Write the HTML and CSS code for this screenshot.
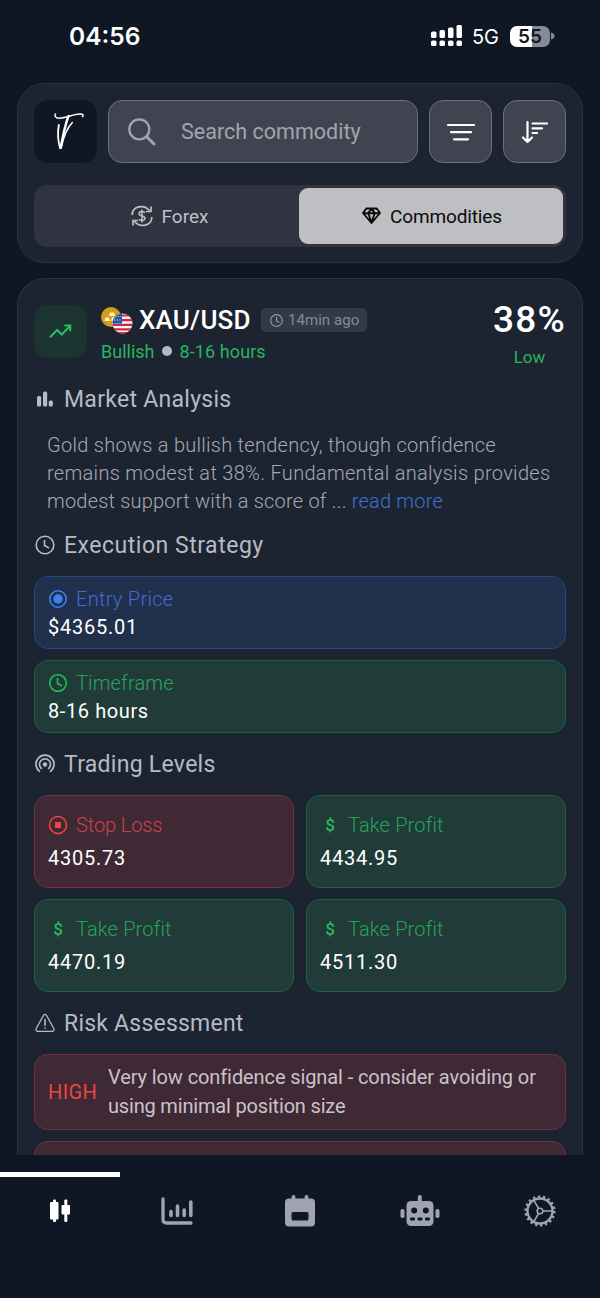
FILE: index.html
```html
<!DOCTYPE html>
<html lang="en">
<head>
	<meta charset="UTF-8">
	<meta name="viewport" content="width=device-width, initial-scale=1">
	<title>Commodities</title>
	<link rel="stylesheet" href="styles.css">
</head>
<body>
	<div class="app">
		<div class="status">
			<span class="clock">04:56</span>
			<div class="status-right">
				<svg class="signal" width="32" height="22" viewBox="0 0 32 22" fill="#fff">
					<rect x="0" y="6.500" width="5.500" height="6.500" rx="1.500"/><rect x="8.500" y="5" width="5.500" height="8" rx="1.500"/><rect x="17" y="2.500" width="5.500" height="10.500" rx="1.500"/><rect x="25.500" y="0" width="5.500" height="13" rx="1.500"/>
					<rect x="0" y="15.500" width="5.500" height="5.500" rx="1.500"/><rect x="8.500" y="15.500" width="5.500" height="5.500" rx="1.500"/><rect x="17" y="15.500" width="5.500" height="5.500" rx="1.500"/><rect x="25.500" y="15.500" width="5.500" height="5.500" rx="1.500"/>
				</svg>
				<span class="net">5G</span>
				<span class="battery">55</span>
				<svg width="4" height="8" viewBox="0 0 4 8"><path d="M0 0.500Q3.500 1.500 3.500 4T0 7.500Z" fill="#858a95"/></svg>
			</div>
		</div>

		<div class="card top">
			<div class="row">
				<div class="logo">
					<svg width="63" height="63" viewBox="0 0 63 63" fill="none" stroke="#fff" stroke-linecap="round" stroke-linejoin="round">
						<path d="M21.500 14C20 15.500 21.500 18.200 25 18.200C33 18 40 13.500 47 14C49.500 14.300 49.500 15.500 48.500 16.500" stroke-width="1.500"/>
						<path d="M34.500 16C31.500 24 29 35 26.800 47.500" stroke-width="2.400"/>
						<path d="M24.800 25C23.500 33 24.300 42 26 48" stroke-width="1.800"/>
						<path d="M27 48.300C29 39 33 28 38.300 22.500" stroke-width="1.600"/>
					</svg>
				</div>
				<div class="search">
					<svg width="28" height="28" viewBox="0 0 28 28" fill="none" stroke="#a2a5ae" stroke-linecap="round"><circle cx="11.300" cy="11.300" r="10" stroke-width="2.300"/><path d="M18.800 18.800L26 26" stroke-width="3"/></svg>
					<span>Search commodity</span>
				</div>
				<div class="btn">
					<svg width="28" height="18" viewBox="0 0 28 18" stroke="#fff" stroke-width="2.200" stroke-linecap="round"><path d="M1 2H27M4 9.200H24M7 16.300H21"/></svg>
				</div>
				<div class="btn">
					<svg width="27" height="24" viewBox="0 0 27 24" fill="none" stroke="#fff" stroke-width="2.200" stroke-linecap="round" stroke-linejoin="round"><path d="M6.500 2V22M2 17.500L6.500 22L11 17.500M11.500 3.500H26M11.500 8.300H21M11.500 13H16"/></svg>
				</div>
			</div>
			<div class="tabs">
				<div class="tab">
					<svg width="22" height="22" viewBox="0 0 22 22" fill="none" stroke="#bfc1c9" stroke-width="1.700"><path d="M1.200 10C1.200 1.500 12.500-1.500 18.500 5.500M20 1.500V6.500H15M20.800 12C20.800 20.500 9.500 23.500 3.500 16.500M2 20.500V15.500H7"/><path d="M14 7.800C13 6 8 6 8 8.700C8 11.800 14 10.200 14 13.300C14 16 9 16 8 14.200M11 4.500V17.500" stroke-width="1.500"/></svg>
					<span>Forex</span>
				</div>
				<div class="tab active">
					<svg width="19" height="18" viewBox="0 0 19 18" fill="none" stroke="#0b0b0c" stroke-width="1.900" stroke-linejoin="round"><path d="M4.300 1.500H14.700L18 6L9.500 16L1 6ZM1 6.200H18M6.200 6.200L9.500 15.500L12.800 6.200M6.200 6L9.500 1.800L12.800 6" /></svg>
					<span>Commodities</span>
				</div>
			</div>
		</div>

		<div class="card signal-card">
			<div class="head">
				<div class="trend">
					<svg width="23" height="15" viewBox="0 0 23 15" fill="none" stroke="#2bbd63" stroke-width="2"><path d="M1 13.300L8.200 6L12.800 10.500L20.500 2.500M15.500 1.500H21.300V7.300"/></svg>
				</div>
				<div class="pair">
					<div class="pair-top">
						<svg class="flags" width="32" height="27" viewBox="0 0 32 27">
							<defs><clipPath id="flag"><circle cx="21.500" cy="16.500" r="10"/></clipPath></defs>
							<circle cx="10" cy="10" r="10" fill="#d69c18"/>
							<path d="M9 5.500H13L14 9H8ZM4.500 10.500H8L9 14H3.500ZM11 10.500H14.500L15.500 14H10Z" fill="#fff3cf"/>
							<g clip-path="url(#flag)"><rect x="11" y="6" width="21" height="21" fill="#f4f4f6"/><path d="M11 8.500H32M11 13.200H32M11 17.800H32M11 22.400H32M11 26H32" stroke="#d32643" stroke-width="2.200"/><rect x="11" y="6" width="10" height="10.500" fill="#1d55ad"/><path d="M14 9.500H20M13 13H20" stroke="#dce8ff" stroke-width="1.200" stroke-dasharray="1.200 1.500"/></g>
						</svg>
						<span class="symbol">XAU/USD</span>
						<span class="ago"><svg width="13" height="13" viewBox="0 0 20 20" fill="none" stroke="#92969f" stroke-width="1.900"><circle cx="10" cy="10" r="9"/><path d="M10 4.500V10.500L14 13"/></svg><span>14min ago</span></span>
					</div>
					<div class="pair-sub"><span>Bullish</span><i class="dot"></i><span class="hours">8-16 hours</span></div>
				</div>
				<div class="score">
					<div class="pct">38%</div>
					<div class="level">Low</div>
				</div>
			</div>

			<div class="title t1">
				<svg width="20" height="20" viewBox="0 0 20 20" fill="#b7bac3"><rect x="2" y="7" width="4.200" height="10.500" rx="1.500"/><rect x="8" y="2.500" width="4.200" height="15" rx="1.500"/><rect x="13.700" y="11.500" width="4.200" height="6" rx="1.500"/></svg>
				<span class="w1">Market Analysis</span>
			</div>
			<p class="text"><span class="l1">Gold shows a bullish tendency, though confidence</span><br><span class="l2">remains modest at 38%. Fundamental analysis provides</span><br><span class="l3">modest support with a score of ... <a>read more</a></span></p>

			<div class="title t2">
				<svg width="20" height="20" viewBox="0 0 20 20" fill="none" stroke="#b7bac3" stroke-width="1.600"><circle cx="10" cy="10" r="8.800"/><path d="M9.500 5V10.500L14 13"/></svg>
				<span class="w2">Execution Strategy</span>
			</div>
			<div class="box blue">
				<div class="label"><svg width="20" height="20" viewBox="0 0 20 20"><circle cx="10" cy="10" r="8.200" fill="none" stroke="#3b82f6" stroke-width="1.600"/><circle cx="10" cy="10" r="4.700" fill="#3b82f6"/></svg><span class="entry">Entry Price</span></div>
				<div class="value v-entry">$4365.01</div>
			</div>
			<div class="box green">
				<div class="label"><svg width="20" height="20" viewBox="0 0 20 20" fill="none" stroke="#22c55e" stroke-width="1.500"><circle cx="10" cy="10" r="8.300"/><path d="M9.500 5V10.500L14 13"/></svg><span class="frame">Timeframe</span></div>
				<div class="value v-hours">8-16 hours</div>
			</div>

			<div class="title t3">
				<svg width="20" height="20" viewBox="0 0 20 20" fill="none" stroke="#b7bac3" stroke-width="1.700" stroke-linecap="round"><path d="M4.500 17.300A9 9 0 1 1 15.500 17.300M6.300 14.400A5.500 5.500 0 1 1 13.700 14.400"/><circle cx="10" cy="10.500" r="2.200" fill="#b7bac3" stroke="none"/></svg>
				<span class="w3">Trading Levels</span>
			</div>
			<div class="levels">
				<div class="box red">
					<div class="label"><svg width="20" height="20" viewBox="0 0 20 20"><circle cx="10" cy="10" r="8.500" fill="none" stroke="#ef4444" stroke-width="1.500"/><rect x="7" y="7" width="6" height="6" fill="#ef4444"/></svg><span class="stop">Stop Loss</span></div>
					<div class="value">4305.73</div>
				</div>
				<div class="box green">
					<div class="label"><b class="usd">$</b><span class="take">Take Profit</span></div>
					<div class="value">4434.95</div>
				</div>
				<div class="box green">
					<div class="label"><b class="usd">$</b><span class="take">Take Profit</span></div>
					<div class="value">4470.19</div>
				</div>
				<div class="box green">
					<div class="label"><b class="usd">$</b><span class="take">Take Profit</span></div>
					<div class="value">4511.30</div>
				</div>
			</div>

			<div class="title t4">
				<svg width="20" height="20" viewBox="0 0 20 20" fill="none" stroke="#b7bac3" stroke-width="1.300" stroke-linecap="round" stroke-linejoin="round"><path d="M8.600 2.200Q10 0.500 11.400 2.200L18.800 15.500Q19.500 18 17.500 18.300H2.500Q0.500 18 1.200 15.500Z"/><path d="M10 6.500V12.300M10 15V15.300" stroke-width="1.600"/></svg>
				<span class="w4">Risk Assessment</span>
			</div>
			<div class="risk">
				<span class="high">HIGH</span>
				<p><span class="r1">Very low confidence signal - consider avoiding or</span><br><span class="r2">using minimal position size</span></p>
			</div>
			<div class="risk"></div>
		</div>

		<div class="nav">
			<div class="item on">
				<svg width="22" height="24" viewBox="0 0 22 24" fill="#fff"><rect x="1" y="3" width="8.500" height="17.500" rx="1"/><rect x="4" y="0.500" width="3" height="22.500" rx="1"/><rect x="12.500" y="6" width="8.500" height="9.500" rx="1"/><rect x="15.300" y="0.500" width="3" height="22.500" rx="1"/></svg>
			</div>
			<div class="item">
				<svg class="chart" width="32" height="28" viewBox="0 0 32 28" fill="none" stroke="#a0a4b0" stroke-linecap="round" stroke-linejoin="round"><path d="M2 2V22.500Q2 26 5.500 26H30" stroke-width="3.300"/><path d="M10 14.500V18.500M16.500 9V18.500M23.200 13V18.500M29.800 5V18.500" stroke-width="3.600"/></svg>
			</div>
			<div class="item">
				<svg width="30" height="32" viewBox="0 0 30 32"><path d="M8.500 2V6M21.500 2V6" stroke="#a0a4b0" stroke-width="3.800" stroke-linecap="round"/><rect x="0" y="3.500" width="30" height="28" rx="4" fill="#a0a4b0"/><rect x="6.500" y="17" width="17" height="8.500" rx="1.500" fill="#0f1724"/></svg>
			</div>
			<div class="item">
				<svg class="bot" width="40" height="32" viewBox="0 0 40 32" fill="#a0a4b0"><rect x="17.800" y="0" width="4" height="9" rx="2"/><rect x="6.500" y="6" width="27" height="25" rx="4.500"/><rect x="0.500" y="14" width="4" height="9" rx="1.700"/><rect x="35.500" y="14" width="4" height="9" rx="1.700"/><g fill="#0f1724"><circle cx="14.200" cy="15.500" r="3"/><circle cx="25.800" cy="15.500" r="3"/><rect x="10" y="22.500" width="5" height="3" rx="1.200"/><rect x="17.500" y="22.500" width="5" height="3" rx="1.200"/><rect x="25" y="22.500" width="5" height="3" rx="1.200"/></g></svg>
			</div>
			<div class="item">
				<svg width="32" height="32" viewBox="0 0 32 32" fill="none" stroke="#a0a4b0"><circle cx="16" cy="16" r="14.300" stroke-width="2.600" stroke-dasharray="2.300 2.692"/><circle cx="16" cy="16" r="12.500" stroke-width="2.300"/><circle cx="16" cy="16" r="2.800" stroke-width="1.600"/><path d="M18.800 16H28.500M14.600 13.500L9.700 5.200M14.600 18.500L9.700 26.800" stroke-width="1.600"/></svg>
			</div>
		</div>
	</div>
</body>
</html>
```
FILE: styles.css
```css
* {
	box-sizing: border-box;
}
body {
	margin: 0;
	background: #0f1724;
	color: #fff;
	font-family: Roboto, "Noto Sans", sans-serif;
	overflow: hidden;
}
svg {
	display: block;
	flex: none;
}
p {
	margin: 0;
}
span {
	white-space: nowrap;
}
.app {
	width: 600px;
	height: 1298px;
	padding: 0 17px;
	display: flex;
	flex-direction: column;
}

/* status bar */
.status {
	height: 83px;
	flex: none;
	padding: 0 28px 11px 52px;
	display: flex;
	align-items: center;
	justify-content: space-between;
}
.clock {
	font-family: Inter, sans-serif;
	font-size: 24.5px;
	font-weight: 600;
}
.status-right {
	display: flex;
	align-items: center;
}
.net {
	margin: 2px 11px 0 9px;
	font-family: Inter, sans-serif;
	font-size: 20px;
}
.battery {
	width: 40px;
	height: 21px;
	margin-right: 1px;
	border-radius: 7px;
	background: linear-gradient(90deg, #fff 55%, #858a95 55%);
	color: #0f1724;
	font: 600 19px/21px Inter, sans-serif;
	text-align: center;
}

.card {
	background: #1c2431;
	border: 1.500px solid #2c3440;
	border-radius: 28px;
	padding: 16px;
}
.top {
	height: 180px;
	flex: none;
}
.row {
	display: flex;
	gap: 11px;
}
.logo, .btn {
	width: 63px;
	height: 63px;
	flex: none;
	border-radius: 14px;
}
.logo {
	background: #0f1724;
}
.search, .btn {
	background: #414450;
	border: 1px solid #6c707b;
	display: flex;
	align-items: center;
}
.search {
	flex: 1;
	border-radius: 14px;
	padding-left: 19px;
	gap: 25px;
	color: #a2a5ae;
	font-size: 21.5px;
	letter-spacing: .02px;
}
.btn {
	justify-content: center;
}
.tabs {
	display: grid;
	grid-template-columns: 1fr 1fr;
	height: 62px;
	margin-top: 22px;
	padding: 3px 3px 3px 1px;
	border-radius: 13px;
	background: #313440;
}
.tab {
	display: flex;
	align-items: center;
	justify-content: center;
	gap: 9px;
	padding-left: 5px;
	border-radius: 9px;
	color: #bfc1c9;
	font-size: 19px;
}
.active {
	padding-left: 2px;
	background: #bebfc2;
	color: #0b0b0c;
	letter-spacing: -.15px;
}

/* signal */
.signal-card {
	flex: 1;
	min-height: 0;
	margin-top: 15px;
	padding-top: 20px;
	border-bottom: 0;
	border-radius: 28px 28px 0 0;
	overflow: hidden;
}
.head {
	display: flex;
	height: 80px;
}
.trend {
	width: 53px;
	height: 53px;
	margin-top: 6px;
	border-radius: 14px;
	background: #1b342f;
	display: flex;
	align-items: center;
	justify-content: center;
}
.pair {
	flex: 1;
	margin-left: 14px;
}
.pair-top {
	display: flex;
	align-items: center;
	height: 42px;
}
.symbol {
	width: 111px;
	margin-left: 6px;
	font-size: 26px;
	font-weight: 500;
	letter-spacing: .2px;
}
.ago {
	display: flex;
	align-items: center;
	gap: 5px;
	width: 106px;
	height: 24px;
	margin-left: 11px;
	padding-left: 9px;
	border-radius: 5px;
	background: #333a46;
	color: #858a94;
	font-size: 15px;
	letter-spacing: .05px;
}
.pair-sub {
	display: flex;
	align-items: center;
	height: 20px;
	color: #28b45f;
	font-size: 18px;
}
.dot {
	width: 10px;
	height: 10px;
	margin: 0 7px 0 8px;
	border-radius: 50%;
	background: #b4b8c6;
}
.hours {
	letter-spacing: .1px;
}
.score {
	width: 73px;
	text-align: center;
}
.pct {
	height: 42px;
	font-size: 37px;
	font-weight: 500;
	line-height: 42px;
	letter-spacing: 1.2px;
}
.level {
	color: #28b45f;
	font-size: 17px;
	line-height: 33px;
}
.title {
	display: flex;
	align-items: center;
	gap: 9px;
	height: 30px;
	padding-left: 1px;
	color: #b7bac3;
	font-size: 23px;
	font-weight: 450;
}
.w1, .w3 {
	letter-spacing: .28px;
}
.w2 {
	letter-spacing: .52px;
}
.w4 {
	letter-spacing: .22px;
}
.t1 {
	margin-top: 5px;
}
.text {
	margin: 17px 0 0 13px;
	color: #a5a9b3;
	font-size: 20px;
	font-weight: 300;
	line-height: 28px;
}
.l1 {
	letter-spacing: .27px;
}
.l2 {
	letter-spacing: .31px;
}
.l3 {
	letter-spacing: .2px;
}
.text a {
	color: #3f72cc;
}
.t2 {
	margin: 15px 0 16px;
}
.box {
	height: 73px;
	padding: 7px 13px;
	border: 1px solid;
	border-radius: 14px;
}
.box + .box {
	margin-top: 11px;
}
.blue {
	background: #21304d;
	border-color: #264780;
	color: #3f6fd0;
}
.green {
	background: #203b38;
	border-color: #216143;
	color: #28a35c;
}
.red {
	background: #3e2935;
	border-color: #7a303d;
	color: #d04149;
}
.label {
	display: flex;
	align-items: center;
	gap: 8px;
	height: 30px;
	font-size: 20px;
	font-weight: 300;
}
.entry {
	letter-spacing: .28px;
}
.frame, .take {
	letter-spacing: .15px;
}
.stop {
	letter-spacing: -.1px;
}
.value {
	color: #fff;
	font-size: 20px;
	line-height: 27px;
	letter-spacing: .75px;
}
.v-hours {
	letter-spacing: .6px;
}
.t3 {
	margin: 16px 0;
}
.levels {
	display: grid;
	grid-template-columns: 1fr 1fr;
	gap: 11px 12px;
}
.levels .box {
	height: 93px;
	margin: 0;
	padding-top: 14px;
}
.levels .value {
	margin-top: 5px;
}
.usd {
	width: 20px;
	font-size: 17px;
	font-weight: 500;
	text-align: center;
	color: #28b95f;
}
.t4 {
	margin: 16px 0;
}
.risk {
	display: flex;
	align-items: center;
	height: 76px;
	margin-bottom: 11px;
	padding-left: 13px;
	border: 1px solid #7a303d;
	border-radius: 14px;
	background: #3e2935;
	color: #cbc2c9;
	font-size: 20px;
	line-height: 29px;
}
.high {
	width: 60px;
	color: #ef4444;
	letter-spacing: .4px;
}
.r1 {
	letter-spacing: -.1px;
}
.r2 {
	letter-spacing: -.18px;
}

/* bottom navigation */
.nav {
	flex: none;
	display: grid;
	grid-template-columns: repeat(5, 1fr);
	height: 143px;
	margin: 0 -17px;
	padding-top: 17px;
}
.item {
	height: 72px;
	border-top: 5px solid transparent;
	display: flex;
	align-items: center;
	justify-content: center;
}
.on {
	border-color: #fff;
}
.chart {
	margin-right: 7px;
}
```
